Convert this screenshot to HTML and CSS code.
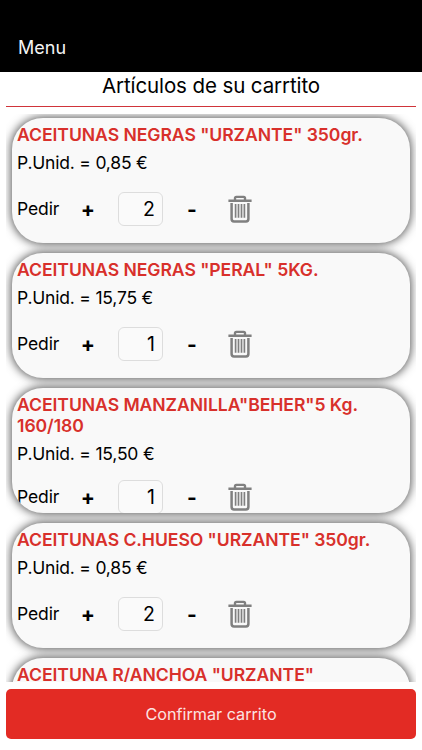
FILE: index.html
```
<!DOCTYPE html>
<html lang="es">
<head>
    <meta charset="UTF-8">
    <meta name="viewport" content="width=device-width, initial-scale=1.0">
    <title>Carrito</title>
    <link rel="stylesheet" href="styles.css">
</head>
<body>
    <svg class="sprite">
        <symbol id="trash" viewBox="0 0 24 28">
            <path d="M0.4 5.7h23.2M7 5V3.2Q7 1.9 8.3 1.9h7.4Q17 1.9 17 3.2V5" fill="none" stroke="#808080" stroke-width="2.4"/>
            <path d="M3.6 8v16q0 2.4 2.4 2.4h12q2.4 0 2.4-2.4V8" fill="none" stroke="#808080" stroke-width="2.5"/>
            <path d="M7.6 9v13.8M10.5 9v13.8M13.5 9v13.8M16.4 9v13.8" fill="none" stroke="#808080" stroke-width="1.7"/>
        </symbol>
    </svg>

    <header class="topbar">
        <a class="menu">Menu</a>
    </header>

    <h1 class="title">Artículos de su carrtito</h1>

    <main class="list">
        <div class="card">
            <h2>ACEITUNAS NEGRAS "URZANTE" 350gr.</h2>
            <p>P.Unid. = 0,85 €</p>
            <div class="order">
                <span class="label">Pedir</span>
                <button class="plus">+</button>
                <input type="text" value="2">
                <button class="minus">-</button>
                <svg class="trash"><use href="#trash"/></svg>
            </div>
        </div>
        <div class="card">
            <h2>ACEITUNAS NEGRAS "PERAL" 5KG.</h2>
            <p>P.Unid. = 15,75 €</p>
            <div class="order">
                <span class="label">Pedir</span>
                <button class="plus">+</button>
                <input type="text" value="1">
                <button class="minus">-</button>
                <svg class="trash"><use href="#trash"/></svg>
            </div>
        </div>
        <div class="card two-lines">
            <h2>ACEITUNAS MANZANILLA"BEHER"5 Kg. 160/180</h2>
            <p>P.Unid. = 15,50 €</p>
            <div class="order">
                <span class="label">Pedir</span>
                <button class="plus">+</button>
                <input type="text" value="1">
                <button class="minus">-</button>
                <svg class="trash"><use href="#trash"/></svg>
            </div>
        </div>
        <div class="card">
            <h2>ACEITUNAS C.HUESO "URZANTE" 350gr.</h2>
            <p>P.Unid. = 0,85 €</p>
            <div class="order">
                <span class="label">Pedir</span>
                <button class="plus">+</button>
                <input type="text" value="2">
                <button class="minus">-</button>
                <svg class="trash"><use href="#trash"/></svg>
            </div>
        </div>
        <div class="card">
            <h2>ACEITUNA R/ANCHOA "URZANTE"</h2>
        </div>
    </main>

    <footer class="bottom">
        <button class="confirm">Confirmar carrito</button>
    </footer>
</body>
</html>
```
FILE: styles.css
```
* {
    box-sizing: border-box;
}
body {
    margin: 0;
    height: 750px;
    display: flex;
    flex-direction: column;
    overflow: hidden;
    background-color: white;
    color: #000;
    font-family: Inter, "Liberation Sans", sans-serif;
}
.sprite {
    display: none;
}
.topbar {
    height: 72px;
    padding: 36px 18px 0;
    background-color: #000;
    color: #f4f4f4;
    font-size: 18px;
    line-height: 24px;
}
.title {
    height: 35px;
    margin: 0 6px;
    border-bottom: 1px solid #d0343a;
    text-align: center;
    font-size: 20.5px;
    font-weight: 400;
    letter-spacing: -0.1px;
    line-height: 28px;
}
.list {
    height: 568px;
    margin: 7px 6px 0;
    padding: 4px 6px 0;
    overflow: hidden;
}
.card {
    height: 125px;
    margin-bottom: 10px;
    padding: 6px 5px 0;
    border-radius: 31px;
    background-color: #f9f9f9;
    box-shadow: 0 0 10px 1px #555;
    overflow: hidden;
}
.card h2 {
    margin: 0;
    color: #d8302b;
    font-size: 17.6px;
    font-weight: 600;
    letter-spacing: -0.06px;
    line-height: 21px;
}
.card p {
    margin: 7px 0 0;
    font-size: 17.5px;
    letter-spacing: -0.2px;
    line-height: 22px;
}
.order {
    display: flex;
    align-items: center;
    height: 34px;
    margin-top: 18px;
}
.two-lines .order {
    margin-top: 15px;
}
.label {
    width: 61px;
    padding-bottom: 2px;
    font-size: 17.5px;
    letter-spacing: -0.1px;
}
.order button {
    padding: 0;
    border: none;
    background: none;
    color: #000;
    font: 700 21px Inter, sans-serif;
    text-align: center;
}
.order .plus {
    width: 20px;
}
.order .minus {
    width: 20px;
    margin-left: 19px;
}
.order input {
    width: 45px;
    height: 34px;
    margin-left: 20px;
    padding: 0 7px 0 0;
    border: 1px solid #ddd;
    border-radius: 6px;
    background-color: #fafafa;
    color: #000;
    font: 19.5px Inter, sans-serif;
    text-align: right;
}
.trash {
    width: 24px;
    height: 28px;
    margin-left: 26px;
}
.bottom {
    padding: 7px 6px 0;
}
.confirm {
    width: 100%;
    height: 50px;
    border: none;
    border-radius: 5px;
    background-color: #e32b24;
    color: #fbe4e2;
    font: 16.2px Inter, sans-serif;
}
```
